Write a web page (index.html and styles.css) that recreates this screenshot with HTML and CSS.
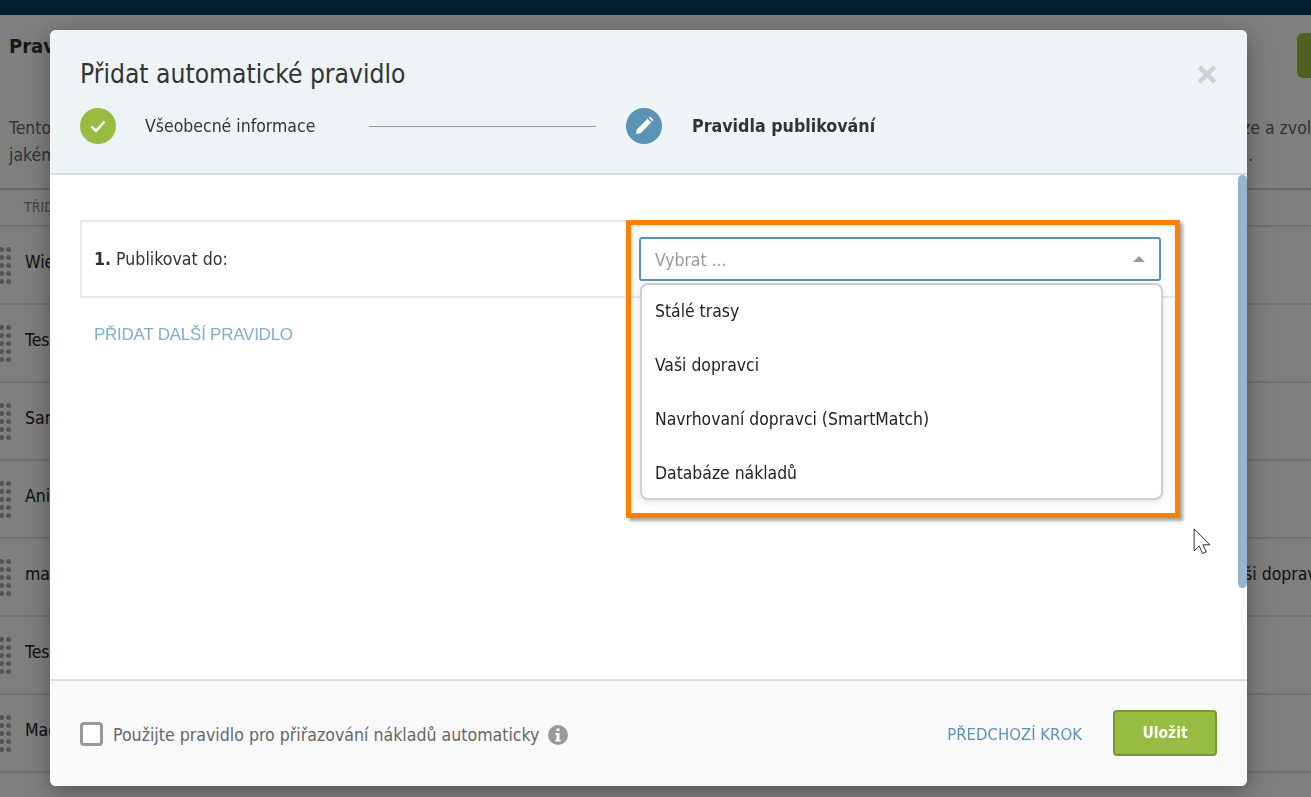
FILE: index.html
```html
<!DOCTYPE html>
<html lang="cs">
<head>
<meta charset="utf-8">
<title>Přidat automatické pravidlo</title>
<link rel="stylesheet" href="styles.css">
</head>
<body>
<div class="page">
  <div class="topbar"></div>
  <div class="title-row">
    <h1 class="page-title">Pravidla</h1>
    <div class="page-btn"></div>
  </div>
  <div class="intro">
    <div class="intro-line"><span>Tento</span><span class="intro-tail">ze a zvolte</span></div>
    <div class="intro-line"><span>jakém</span><span class="intro-end">.</span></div>
  </div>
  <div class="table-head">TŘIDIT</div>
  <div class="row"><span class="grip"><i></i><i></i><i></i><i></i><i></i><i></i><i></i><i></i><i></i><i></i></span><span class="row-name">Wien</span></div>
  <div class="row"><span class="grip"><i></i><i></i><i></i><i></i><i></i><i></i><i></i><i></i><i></i><i></i></span><span class="row-name">Test</span></div>
  <div class="row"><span class="grip"><i></i><i></i><i></i><i></i><i></i><i></i><i></i><i></i><i></i><i></i></span><span class="row-name">Sam</span></div>
  <div class="row"><span class="grip"><i></i><i></i><i></i><i></i><i></i><i></i><i></i><i></i><i></i><i></i></span><span class="row-name">Ani</span></div>
  <div class="row"><span class="grip"><i></i><i></i><i></i><i></i><i></i><i></i><i></i><i></i><i></i><i></i></span><span class="row-name">ma</span><span class="row-target">Vaši dopravci</span></div>
  <div class="row"><span class="grip"><i></i><i></i><i></i><i></i><i></i><i></i><i></i><i></i><i></i><i></i></span><span class="row-name">Test</span></div>
  <div class="row"><span class="grip"><i></i><i></i><i></i><i></i><i></i><i></i><i></i><i></i><i></i><i></i></span><span class="row-name">Mag</span></div>
</div>
<div class="overlay"></div>
<div class="modal">
  <header class="modal-head">
    <h2 class="modal-title">Přidat automatické pravidlo</h2>
    <svg class="close" viewBox="0 0 20 20" aria-hidden="true"><path d="M2 2 18 18M18 2 2 18" fill="none" stroke="#cfd2d3" stroke-width="5"/></svg>
    <div class="steps">
      <span class="step-dot done"><svg viewBox="0 0 36 36" aria-hidden="true"><path d="M11.500 18.500 16 23 24.500 13.500" fill="none" stroke="#fff" stroke-width="2.400"/></svg></span>
      <span class="step-label">Všeobecné informace</span>
      <span class="step-line"></span>
      <span class="step-dot active"><svg viewBox="0 0 36 36" aria-hidden="true"><path d="M10 26 10.800 21.500 21.500 10.800 25.200 14.500 14.500 25.200Z M22.800 9.500 24 8.500 27.500 12 26.500 13.200Z" fill="#fff"/></svg></span>
      <span class="step-label current">Pravidla publikování</span>
    </div>
  </header>
  <main class="modal-body">
    <div class="rule">
      <div class="rule-label"><b>1.</b> Publikovat do:</div>
      <div class="select"><span class="placeholder">Vybrat ...</span><span class="caret"></span></div>
    </div>
    <a class="add-rule">PŘIDAT DALŠÍ PRAVIDLO</a>
    <ul class="menu">
      <li>Stálé trasy</li>
      <li>Vaši dopravci</li>
      <li>Navrhovaní dopravci (SmartMatch)</li>
      <li>Databáze nákladů</li>
    </ul>
    <div class="highlight"></div>
    <div class="scrollbar"></div>
    <svg class="cursor" viewBox="0 0 20 30" aria-hidden="true"><path d="M1 1V24.500L6.500 19.300 10 27.300 14 25.700 10.500 18H18Z" fill="#fff" stroke="#222" stroke-width="1"/></svg>
  </main>
  <footer class="modal-foot">
    <span class="checkbox"></span>
    <span class="check-label">Použijte pravidlo pro přiřazování nákladů automaticky</span>
    <svg class="info" viewBox="0 0 20 20" aria-hidden="true"><circle cx="10" cy="10" r="10" fill="#999"/><path d="M8.500 3.500h3v2.600h-3Z M7.500 8h4v6.500h1.200V16.500H7.300V14.500h1.200V10H7.500Z" fill="#fff"/></svg>
    <a class="prev">PŘEDCHOZÍ KROK</a>
    <button class="save">Uložit</button>
  </footer>
</div>
</body>
</html>
```

FILE: styles.css
```css
* { box-sizing: border-box; }
html, body { margin: 0; height: 100%; overflow: hidden; }
body {
  background: #fff;
  color: #222;
  font-family: "DejaVu Sans Condensed", "DejaVu Sans", sans-serif;
  font-size: 16px;
}
.page { height: 797px; overflow: hidden; }
.topbar { height: 15px; background: #001e2f; }
.title-row { display: flex; justify-content: space-between; align-items: flex-start; height: 93px; padding: 18px 0 0 9px; }
.page-title { margin: 0; font-size: 20px; line-height: 26px; font-weight: 700; color: #333; }
.page-btn { width: 14px; height: 45px; background: #9dc23f; border-radius: 6px 0 0 6px; }
.intro { height: 82px; padding: 7px 0 0 9px; color: #666; font-size: 17.500px; line-height: 27px; border-bottom: 2px solid #c9d5de; }
.intro-line { display: flex; justify-content: space-between; }
.intro-tail { margin-right: -16px; white-space: nowrap; }
.intro-end { padding-right: 58px; }
.table-head { height: 37px; padding: 9px 0 0 24px; font-size: 14px; color: #888; border-bottom: 2px solid #d8e1e8; }
.row { position: relative; display: flex; align-items: center; height: 78px; border-bottom: 2px solid #dde4ea; }
.grip { display: grid; grid-template-columns: 5px 5px; gap: 3px 2px; width: 26px; margin-left: -1px; padding-top: 1px; }
.grip i { width: 5px; height: 5px; border-radius: 50%; background: #aaa; }
.row-name { font-size: 17.500px; padding-bottom: 6px; }
.row-target { margin-left: auto; padding-bottom: 6px; font-size: 17.500px; white-space: nowrap; width: 86px; }
.overlay { position: fixed; inset: 15px 0 0; background: rgba(0, 0, 0, .5); }
.modal {
  position: absolute; left: 50px; top: 30px; width: 1197px; height: 756px;
  display: flex; flex-direction: column;
  background: #fff; border-radius: 6px; overflow: hidden;
  box-shadow: 0 5px 25px rgba(0, 0, 0, .35);
}
.modal-head { position: relative; height: 145px; flex: none; padding: 26px 30px 0; background: #eef3f6; border-bottom: 2px solid #cfdfe9; }
.modal-title { margin: 0; font-size: 26.200px; line-height: 36px; font-weight: 400; color: #333; }
.close { position: absolute; left: 1146px; top: 35px; width: 22px; height: 19px; }
.steps { display: flex; align-items: center; margin-top: 16px; }
.step-dot { display: block; flex: none; width: 36px; height: 36px; border-radius: 50%; }
.step-dot svg { display: block; width: 36px; height: 36px; }
.done { background: #96bd41; }
.active { background: #5b93b4; }
.step-label { margin-left: 29px; font-size: 17.500px; color: #333; white-space: nowrap; width: 224px; }
.step-line { width: 227px; height: 1px; margin-right: 30px; background: #8f9aa1; }
.current { margin-left: 30px; font-weight: 700; font-size: 17.700px; }
.modal-body { position: relative; flex: 1; padding: 45px 67px 0 30px; }
.rule { display: flex; align-items: center; justify-content: space-between; height: 78px; padding: 0 19px 0 12px; border: 2px solid #e3eaf0; }
.rule-label { font-size: 17.600px; color: #333; }
.select { display: flex; align-items: center; justify-content: space-between; width: 522px; height: 44px; margin-right: -2px; padding: 0 14px 0 14px; border: 2px solid #5b93b4; border-radius: 3px; font-size: 17.400px; color: #999; background: #fff; }
.placeholder { padding-top: 1px; }
.caret { width: 0; height: 0; border: 6.500px solid transparent; border-top: 0; border-bottom-color: #999; }
.add-rule { display: block; margin: 27px 0 0 14px; font-family: "Liberation Sans", sans-serif; font-size: 17px; letter-spacing: -.25px; color: #82aecb; }
.menu { position: absolute; left: 590px; top: 108px; width: 523px; height: 217px; margin: 0; padding: 0; list-style: none; background: #fff; border: 2px solid #d0d0d0; border-radius: 8px; box-shadow: 0 2px 8px rgba(0,0,0,.12); }
.menu li { height: 54px; padding: 1px 0 0 13px; font-size: 17.400px; line-height: 50px; color: #222; }
.highlight { position: absolute; left: 576px; top: 45px; width: 554px; height: 298px; border: 5px solid #ff8000; box-shadow: 3px 3px 3px rgba(0,0,0,.35), inset 2px 2px 4px rgba(0,0,0,.08); pointer-events: none; }
.scrollbar { position: absolute; right: 0; top: 0; width: 9px; height: 413px; background: #94b5cc; border-radius: 5px; }
.cursor { position: absolute; left: 1143px; top: 353px; width: 19px; height: 28px; }
.modal-foot { flex: none; display: flex; align-items: center; height: 107px; padding: 0 30px; background: #f9f9f9; border-top: 2px solid #ddd; }
.checkbox { width: 23px; height: 24px; margin-top: 1px; border: 3px solid #999; border-radius: 4px; background: #fff; }
.check-label { margin: 3px 0 0 10px; font-size: 17.600px; color: #666; }
.info { width: 20px; height: 20px; margin: 3px 0 0 9px; }
.prev { margin: 1px 0 0 auto; font-size: 16.600px; color: #5b93b4; }
.save { width: 104px; height: 46px; margin: 0 0 1px 31px; border: 2px solid #779838; border-radius: 4px; background: #96bd41; color: #fff; font: 700 15.500px "DejaVu Sans Condensed", "DejaVu Sans", sans-serif; }
```
